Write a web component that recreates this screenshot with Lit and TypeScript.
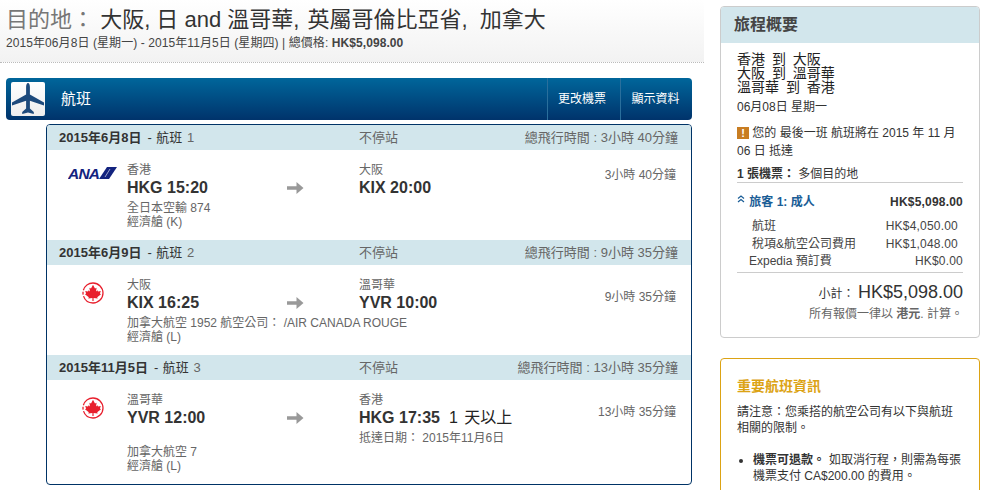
import { LitElement, css, html } from 'lit'
import { customElement } from 'lit/decorators.js'

interface Leg {
   date: string
   no: string
   total: string
   airline: 'ana' | 'ac'
   fromCity: string
   from: string
   toCity: string
   to: string
   extra?: string
   arrival?: string
   carrier: string
   cabin: string
   spaced?: boolean
   duration: string
   durationHigh?: boolean
}

const legs: Leg[] = [
   {
      date: '2015年6月8日', no: '1', total: '3小時 40分鐘', airline: 'ana',
      fromCity: '香港', from: 'HKG 15:20', toCity: '大阪', to: 'KIX 20:00',
      carrier: '全日本空輸 874', cabin: '經濟艙 (K)', duration: '3小時 40分鐘', durationHigh: true
   },
   {
      date: '2015年6月9日', no: '2', total: '9小時 35分鐘', airline: 'ac',
      fromCity: '大阪', from: 'KIX 16:25', toCity: '溫哥華', to: 'YVR 10:00',
      carrier: '加拿大航空 1952 航空公司： /AIR CANADA ROUGE', cabin: '經濟艙 (L)', duration: '9小時 35分鐘'
   },
   {
      date: '2015年11月5日', no: '3', total: '13小時 35分鐘', airline: 'ac',
      fromCity: '溫哥華', from: 'YVR 12:00', toCity: '香港', to: 'HKG 17:35', extra: '1 天以上',
      arrival: '抵達日期： 2015年11月6日', carrier: '加拿大航空 7', cabin: '經濟艙 (L)',
      spaced: true, duration: '13小時 35分鐘'
   }
]

const anaLogo = html`<svg class="logo-ana" width="49" height="14" viewBox="0 0 49 14">
   <text x="0" y="12.5" font-family="Liberation Sans" font-weight="700" font-style="italic" font-size="15.5" fill="#13237f" textLength="32">ANA</text>
   <path d="M39 1H49L41 13H31Z" fill="#13237f"/>
   <path d="M42 3L37 11" stroke="#fff" stroke-width=".6"/>
</svg>`

const acLogo = html`<svg class="logo-ac" width="24" height="24" viewBox="0 0 24 24">
   <circle cx="12" cy="12" r="10" fill="none" stroke="#e8202e" stroke-width="1.3" stroke-dasharray="28 1.5 3 1.5 29"/>
   <path d="M12 3.8L14 7.6L15.6 6.8L15 10.4L16.4 9.2L17 10.5L19.8 10L18.9 12.6L20 13.3L16.2 16.2L16.7 17.6L12.6 17V20H11.4V17L7.3 17.6L7.8 16.2L4 13.3L5.1 12.6L4.2 10L7 10.5L7.6 9.2L9 10.4L8.4 6.8L10 7.6Z" fill="#e8202e"/>
</svg>`

const arrow = html`<svg width="17" height="14" viewBox="0 0 17 14"><path d="M0 5.2H9.5V1L16.5 7L9.5 13V8.8H0Z" fill="#999"/></svg>`

const plane = html`<svg width="34" height="34" viewBox="0 0 34 34">
   <path d="M17 1C18.2 1 18.9 3 18.9 5V12.5L33 20.5V23.5L18.9 18.8V26.5L22.8 30V32L17 30.6L11.2 32V30L15.1 26.5V18.8L1 23.5V20.5L15.1 12.5V5C15.1 3 15.8 1 17 1Z" fill="#1d4a7c"/>
</svg>`

const chevrons = html`<svg class="chev" width="8" height="8" viewBox="0 0 8 8">
   <path d="M1 3.5L4 1L7 3.5M1 7L4 4.5L7 7" fill="none" stroke="#1a5d96" stroke-width="1.2"/>
</svg>`

@customElement('app-root')
export class AppRoot extends LitElement {

   renderLeg(leg: Leg) {
      return html`
         <div class="leg-head">
            <span class="leg-date"><b>${leg.date}</b><span class="leg-no">- 航班 <span class="num">${leg.no}</span></span></span>
            <span class="leg-stop">不停站</span>
            <span class="leg-total">總飛行時間 : ${leg.total}</span>
         </div>
         <div class="leg-body">
            <div class="logo">${leg.airline === 'ana' ? anaLogo : acLogo}</div>
            <div class="point">
               <div class="city">${leg.fromCity}</div>
               <div class="code">${leg.from}</div>
               <div class="info ${leg.spaced ? 'spaced' : ''}">${leg.carrier}<br>${leg.cabin}</div>
            </div>
            <div class="arrow">${arrow}</div>
            <div class="point">
               <div class="city">${leg.toCity}</div>
               <div class="code">${leg.to}${leg.extra ? html`<span class="extra">${leg.extra}</span>` : ''}</div>
               ${leg.arrival ? html`<div class="info">${leg.arrival}</div>` : ''}
            </div>
            <div class="duration ${leg.durationHigh ? 'high' : ''}">${leg.duration}</div>
         </div>
      `
   }

   render() {
      return html`
         <div class="page">
            <main>
               <header class="head">
                  <h1><span class="lead">目的地：</span> 大阪, 日 and 溫哥華, <span class="prov">英屬哥倫比亞省,</span> <span class="ctry">加拿大</span></h1>
                  <p>2015年06月8日 (星期一) - 2015年11月5日 (星期四) | 總價格: <b>HK$5,098.00</b></p>
               </header>
               <div class="bar">
                  <div class="bar-icon">${plane}</div>
                  <div class="bar-title">航班</div>
                  <a>更改機票</a>
                  <a>顯示資料</a>
               </div>
               <section class="card">
                  ${legs.map(leg => this.renderLeg(leg))}
               </section>
            </main>
            <aside>
               <section class="summary">
                  <h2>旅程概要</h2>
                  <div class="sum-body">
                     <div class="route">香港 到 大阪<br>大阪 到 溫哥華<br>溫哥華 到 香港</div>
                     <div class="depart">06月08日 星期一</div>
                     <div class="notice"><span class="warn">!</span> 您的 最後一班 航班將在 2015 年 11 月 06 日 抵達</div>
                     <div class="tickets"><b>1 張機票：</b> 多個目的地</div>
                     <div class="traveler">
                        <span class="who">${chevrons} 旅客 1: 成人</span>
                        <b>HK$5,098.00</b>
                     </div>
                     <div class="fee in"><span>航班</span><span class="amt">HK$4,050.00</span></div>
                     <div class="fee in"><span>稅項&航空公司費用</span><span class="amt">HK$1,048.00</span></div>
                     <div class="fee last"><span>Expedia 預訂費</span><span class="amt">HK$0.00</span></div>
                     <div class="subtotal">小計： <span>HK$5,098.00</span></div>
                     <div class="currency">所有報價一律以 <b>港元</b>. 計算。</div>
                  </div>
               </section>
               <section class="notes">
                  <h3>重要航班資訊</h3>
                  <p>請注意：您乘搭的航空公司有以下與航班相關的限制。</p>
                  <ul>
                     <li><b>機票可退款。</b>如取消行程，則需為每張機票支付 CA$200.00 的費用。</li>
                  </ul>
               </section>
            </aside>
         </div>
      `
   }

   static styles = css`
   :host {
      display: block;
      height: 490px;
      overflow: hidden;
      background: #fff;
      color: #333;
      font-family: "Liberation Sans", "Noto Sans CJK TC", sans-serif;
      font-size: 12px;
   }
   .page {
      display: flex;
      align-items: flex-start;
      width: 988px;
   }
   main {
      width: 704px;
      flex: none;
   }
   .head {
      height: 63px;
      box-sizing: border-box;
      padding: 5px 0 0 6px;
      background: linear-gradient(#fff, #f2f2f2);
      border-bottom: 1px dotted #bbb;
   }
   h1 {
      margin: 0;
      font-size: 22px;
      line-height: 30px;
      font-weight: 400;
      color: #333;
   }
   .lead { color: #777; }
   .prov { margin-left: 2px; }
   .ctry { margin-left: 6px; }
   .head p {
      margin: 0;
      font-size: 12px;
      line-height: 16px;
      letter-spacing: .08px;
      color: #444;
   }
   .bar {
      display: flex;
      align-items: stretch;
      margin: 15px 12px 0 6px;
      height: 42px;
      border-radius: 4px;
      background: linear-gradient(#00669b, #00336b);
      color: #fff;
   }
   .bar-icon {
      width: 34px;
      height: 34px;
      margin: 4px 0 0 5px;
      background: linear-gradient(#fff, #eee);
      border-radius: 2px;
   }
   .bar-title {
      flex: 1;
      padding-left: 16px;
      font-size: 15px;
      line-height: 42px;
   }
   .bar a {
      width: 68px;
      padding-right: 4px;
      text-align: center;
      line-height: 42px;
      border-left: 1px solid #2a6f9c;
   }
   .bar a:last-child {
      width: 69px;
      padding-right: 2px;
   }
   .card {
      margin: 4px 12px 0 46px;
      height: 361px;
      box-sizing: border-box;
      border: 1px solid #003366;
      border-radius: 4px;
      overflow: hidden;
   }
   .leg-head {
      display: grid;
      grid-template-columns: 300px 1fr auto;
      align-items: center;
      height: 25px;
      box-sizing: border-box;
      padding: 0 13px 2px 12px;
      background: #d2e6ec;
      font-size: 13px;
   }
   .leg-date { color: #333; }
   .leg-no { margin-left: 6px; word-spacing: 1px; }
   .num, .leg-stop, .leg-total { color: #666; }
   .leg-body {
      display: grid;
      grid-template-columns: 80px 160px 72px 1fr auto;
      height: 90px;
      box-sizing: border-box;
      padding-top: 13px;
   }
   .logo {
      display: flex;
      justify-content: flex-end;
      align-items: flex-start;
      padding: 3px 10px 0 0;
   }
   .logo-ac { margin: 0 12px 0 0; }
   .point { line-height: 15px; }
   .city { color: #666; }
   .code {
      font-size: 16px;
      font-weight: 700;
      line-height: 20px;
      color: #333;
      white-space: nowrap;
   }
   .extra {
      margin-left: 9px;
      font-weight: 400;
      word-spacing: 2px;
      color: #222;
   }
   .info {
      margin-top: 3px;
      line-height: 14px;
      color: #666;
      white-space: nowrap;
   }
   .info.spaced { margin-top: 17px; }
   .arrow { padding-top: 18px; }
   .duration {
      padding: 9px 15px 0 0;
      color: #666;
   }
   .duration.high { padding-top: 2px; }
   aside {
      width: 260px;
      margin-left: 16px;
      padding-top: 6px;
      flex: none;
   }
   .summary {
      height: 332px;
      box-sizing: border-box;
      border: 1px solid #ccc;
      border-radius: 4px;
      overflow: hidden;
   }
   h2 {
      margin: 0;
      height: 36px;
      padding-left: 13px;
      background: #d2e6ec;
      font-size: 16px;
      line-height: 36px;
      color: #444;
   }
   .sum-body {
      padding: 9px 16px 0;
      color: #333;
   }
   .route {
      font-size: 14px;
      line-height: 14px;
      word-spacing: 3px;
      color: #222;
   }
   .depart { margin-top: 5px; line-height: 16px; }
   .notice { margin-top: 9px; line-height: 18px; }
   .warn {
      display: inline-block;
      width: 12px;
      height: 12px;
      background: #c87d22;
      color: #fff;
      font-size: 11px;
      font-weight: 700;
      line-height: 12px;
      text-align: center;
   }
   .tickets {
      margin-top: 7px;
      padding-bottom: 1px;
      line-height: 14px;
      border-bottom: 1px solid #ccc;
   }
   .traveler {
      display: flex;
      justify-content: space-between;
      margin-top: 10px;
      margin-bottom: 7px;
      line-height: 18px;
      letter-spacing: .2px;
   }
   .who {
      color: #1a5d96;
      font-weight: 700;
      letter-spacing: 0;
   }
   .chev { margin-right: 1px; vertical-align: 3px; }
   .fee {
      display: flex;
      justify-content: space-between;
      line-height: 17.5px;
      color: #444;
   }
   .amt { letter-spacing: .2px; }
   .fee.in { padding: 0 5px 0 15px; }
   .fee.last {
      padding: 0 0 1px 12px;
      border-bottom: 1px solid #ccc;
   }
   .subtotal {
      margin-top: 7px;
      text-align: right;
      line-height: 24px;
   }
   .subtotal span { font-size: 18px; }
   .currency {
      margin-top: 0;
      text-align: right;
      color: #666;
      line-height: 16px;
   }
   .notes {
      height: 200px;
      margin-top: 20px;
      box-sizing: border-box;
      padding: 18px 16px 0;
      border: 1px solid #dca314;
      border-radius: 4px;
   }
   h3 {
      margin: 0;
      font-size: 14px;
      line-height: 18px;
      color: #dca314;
   }
   .notes p {
      margin: 9px 0 0;
      line-height: 16px;
   }
   ul {
      margin: 16px 0 0;
      padding: 0 0 0 16px;
      line-height: 16px;
   }
   li b { margin-right: 4px; }
   `
}

declare global {
   interface HTMLElementTagNameMap {
      'app-root': AppRoot
   }
}
